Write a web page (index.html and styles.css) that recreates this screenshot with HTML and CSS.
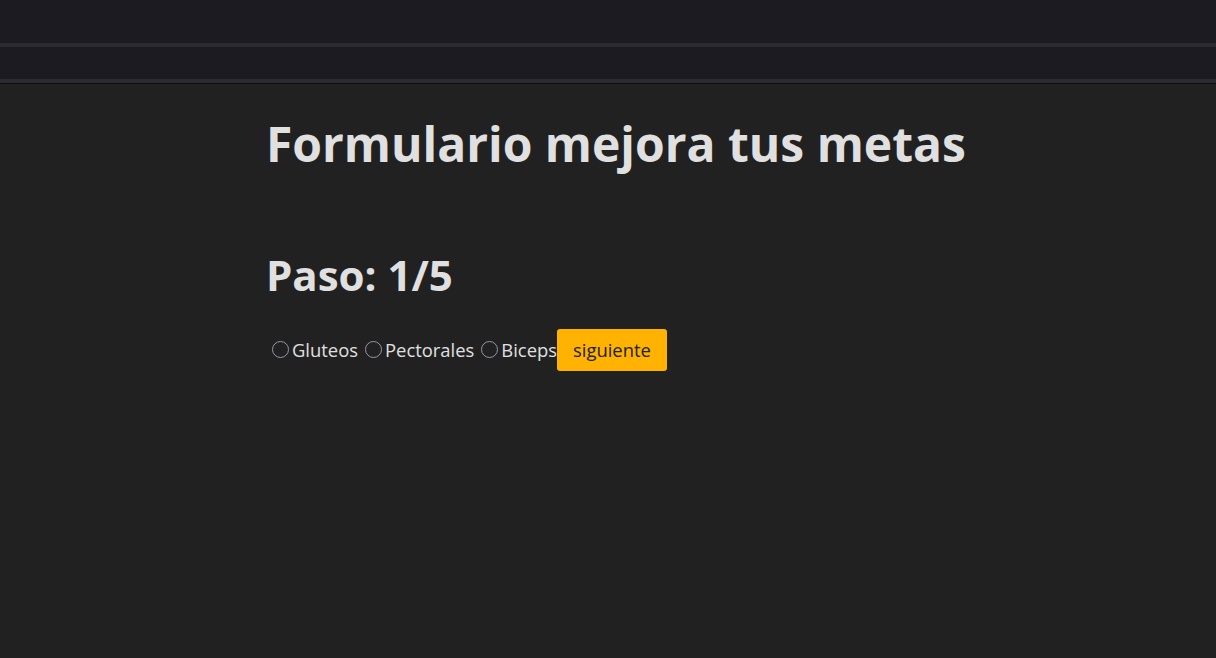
FILE: index.html
```html
<!DOCTYPE html>
<html lang="es">
<head>
<meta charset="utf-8">
<title>Formulario</title>
<link rel="stylesheet" href="styles.css">
</head>
<body>
<header class="topbar">
  <div class="bar bar-one"></div>
  <div class="bar bar-two"></div>
</header>
<main class="container">
  <h1 class="title">Formulario mejora tus metas</h1>
  <h2 class="step">Paso: 1/5</h2>
  <form class="options">
    <label class="opt"><input type="radio" name="musculo" class="radio"><span>Gluteos</span></label>
    <label class="opt"><input type="radio" name="musculo" class="radio"><span>Pectorales</span></label>
    <label class="opt"><input type="radio" name="musculo" class="radio"><span>Biceps</span></label>
    <button type="button" class="next">siguiente</button>
  </form>
</main>
</body>
</html>
```
FILE: styles.css
```css
html, body {
  margin: 0;
  padding: 0;
  background: #212121;
  color: #e0e0e0;
  font-family: "Open Sans", "Noto Sans", sans-serif;
}
.topbar {
  background: #1c1b21;
  border-bottom: 1px solid #0e0e10;
}
.bar {
  border-bottom: 4px solid #2c2b32;
}
.bar-one { height: 43px; }
.bar-two { height: 32px; }
.container {
  width: 684px;
  margin: 0 auto;
}
.title {
  margin: 29px 0 0;
  font-size: 48px;
  font-weight: 700;
  line-height: 1.3;
  white-space: nowrap;
}
.step {
  margin: 73px 0 0;
  font-size: 42px;
  font-weight: 700;
  line-height: 1.3;
}
.options {
  margin-top: 26px;
  display: flex;
  align-items: center;
  font-size: 18.4px;
}
.opt {
  display: inline-flex;
  align-items: center;
  margin-right: 1px;
}
.opt:last-of-type { margin-right: 0; }
.radio {
  appearance: none;
  -webkit-appearance: none;
  width: 17px;
  height: 17px;
  margin: 0 3px 0 6px;
  border: 1.5px solid #9796a6;
  border-radius: 50%;
  background: transparent;
}
.next {
  background: #ffb300;
  color: #212121;
  border: none;
  border-radius: 3px;
  font-family: inherit;
  font-size: 18.4px;
  padding: 0 16px;
  height: 42px;
}
```
